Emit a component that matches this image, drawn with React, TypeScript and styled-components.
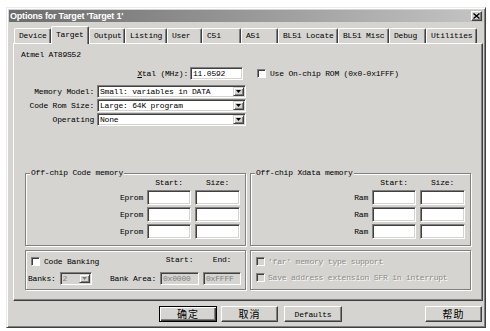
import React from 'react';
import styled, { createGlobalStyle } from 'styled-components';

const FACE = '#d5d4d0';
const MONO = `"Liberation Mono", "DejaVu Sans Mono", monospace`;

const Global = createGlobalStyle`
  html, body { margin: 0; padding: 0; background: #fff; }
  body { width: 490px; height: 331px; overflow: hidden; }
`;

const Page = styled.div`
  padding: 7px 0 0 6px;
`;

const Dialog = styled.div`
  box-sizing: border-box;
  width: 480px;
  height: 321px;
  background: ${FACE};
  border: 1px solid;
  border-color: #ececec #404040 #404040 #ececec;
  box-shadow: inset 1px 1px #fff, inset -1px -1px #808080;
  padding: 2px 2px 0 2px;
  display: flex;
  flex-direction: column;
  font-family: ${MONO};
  font-size: 8px;
  letter-spacing: -0.2px;
  color: #000;
`;

const TitleBar = styled.div`
  height: 12px;
  display: flex;
  align-items: center;
  justify-content: space-between;
  padding: 0 1px 0 1px;
  background: linear-gradient(to right, #6c6c6c, #c4c4c4);
`;

const Title = styled.span`
  font-family: "Liberation Sans", Arial, sans-serif;
  font-weight: bold;
  font-size: 9px;
  letter-spacing: -0.2px;
  color: #fff;
  line-height: 12px;
`;

const CloseButton = styled.span`
  box-sizing: border-box;
  width: 11px;
  height: 10px;
  background: ${FACE};
  border: 1px solid;
  border-color: #fff #404040 #404040 #fff;
  box-shadow: inset -1px -1px #808080;
  display: flex;
  align-items: center;
  justify-content: center;
`;

const Body = styled.div`
  padding-left: 4px;
  display: flex;
  flex-direction: column;
`;

const TabStrip = styled.div`
  display: flex;
  align-items: flex-end;
  height: 17px;
  margin: 4px 0 0 1px;
  position: relative;
  z-index: 1;
`;

const Tab = styled.div<{ $w: number; $active?: boolean }>`
  box-sizing: border-box;
  width: ${(p) => p.$w}px;
  height: ${(p) => (p.$active ? 18 : 15)}px;
  margin-bottom: ${(p) => (p.$active ? -1 : 0)}px;
  padding: ${(p) => (p.$active ? '3px 0 0 4px' : '2px 0 0 4px')};
  background: ${FACE};
  border-top: 1px solid #fff;
  border-left: 1px solid #fff;
  border-right: 1px solid #404040;
  box-shadow: inset -1px 0 #808080;
  border-radius: 2px 2px 0 0;
  line-height: 10px;
  white-space: nowrap;
`;

const Panel = styled.div`
  box-sizing: border-box;
  width: 470px;
  height: 258px;
  border: 1px solid;
  border-color: #fff #404040 #404040 #fff;
  box-shadow: inset -1px -1px #808080;
  display: flex;
  flex-direction: column;
`;

const TopArea = styled.div`
  padding: 5px 0 0 7px;
  display: flex;
  flex-direction: column;
`;

const DeviceName = styled.div`
  height: 12px;
  line-height: 12px;
`;

const XtalRow = styled.div`
  display: flex;
  align-items: center;
  height: 13px;
  margin-top: 6px;
`;

const XtalLabel = styled.span`
  box-sizing: border-box;
  width: 169px;
  padding-right: 2px;
  text-align: right;
  white-space: nowrap;
`;

const Field = styled.div<{ $w: number; $disabled?: boolean }>`
  box-sizing: border-box;
  width: ${(p) => p.$w}px;
  height: 100%;
  flex: none;
  background: ${(p) => (p.$disabled ? FACE : '#fff')};
  border: 1px solid;
  border-color: #808080 #fff #fff #808080;
  box-shadow: inset 1px 1px #404040, inset -1px -1px ${FACE};
  padding: 0 2px;
  display: flex;
  align-items: center;
  color: ${(p) => (p.$disabled ? '#808080' : '#000')};
  white-space: nowrap;
  overflow: hidden;
`;

const Check = styled.span<{ $disabled?: boolean }>`
  box-sizing: border-box;
  width: 9px;
  height: 9px;
  flex: none;
  background: ${(p) => (p.$disabled ? FACE : '#fff')};
  border: 1px solid;
  border-color: #808080 #fff #fff #808080;
  box-shadow: inset 1px 1px #404040;
`;

const CheckLabel = styled.span<{ $disabled?: boolean; $gap: number }>`
  margin-left: ${(p) => p.$gap}px;
  white-space: nowrap;
  color: ${(p) => (p.$disabled ? '#8a8a8a' : '#000')};
  text-shadow: ${(p) => (p.$disabled ? '1px 1px #fff' : 'none')};
`;

const XtalCheck = styled.div`
  display: flex;
  align-items: center;
  margin-left: 14px;
`;

const SelectRows = styled.div`
  display: flex;
  flex-direction: column;
  gap: 1px;
  margin-top: 5px;
`;

const SelectRow = styled.div`
  display: flex;
  align-items: center;
  height: 13px;
`;

const SelectLabel = styled.span`
  box-sizing: border-box;
  width: 76px;
  padding-right: 3px;
  text-align: right;
  white-space: nowrap;
`;

const Select = styled.div<{ $w: number; $disabled?: boolean; $ml?: number }>`
  box-sizing: border-box;
  width: ${(p) => p.$w}px;
  height: 100%;
  flex: none;
  margin-left: ${(p) => p.$ml ?? 0}px;
  display: flex;
  align-items: stretch;
  background: ${(p) => (p.$disabled ? FACE : '#fff')};
  border: 1px solid;
  border-color: #808080 #fff #fff #808080;
  box-shadow: inset 1px 1px #404040, inset -1px -1px ${FACE};
  color: ${(p) => (p.$disabled ? '#808080' : '#000')};
`;

const SelectText = styled.span`
  flex: 1;
  padding-left: 2px;
  display: flex;
  align-items: center;
  white-space: nowrap;
  overflow: hidden;
`;

const DropButton = styled.span`
  box-sizing: border-box;
  width: 11px;
  margin: 1px 1px 1px 0;
  background: ${FACE};
  border: 1px solid;
  border-color: ${FACE} #404040 #404040 ${FACE};
  box-shadow: inset 1px 1px #fff, inset -1px -1px #808080;
  display: flex;
  align-items: center;
  justify-content: center;
`;

const GroupArea = styled.div`
  margin-top: 42px;
  padding-left: 11px;
  display: grid;
  grid-template-columns: 221px 221px;
  grid-template-rows: 78px 40px;
  column-gap: 4px;
  row-gap: 4px;
`;

const Group = styled.fieldset`
  box-sizing: border-box;
  margin: 0;
  min-width: 0;
  height: 100%;
  border: 1px solid #808080;
  box-shadow: 1px 1px #fff, inset 1px 1px #fff;
  padding: 0 5px 0 5px;
`;

const Legend = styled.legend`
  padding: 0 1px;
  margin-left: -1px;
  line-height: 10px;
  background: ${FACE};
  white-space: nowrap;
`;

const MemGrid = styled.div`
  display: grid;
  grid-template-columns: 1fr 44px 45px;
  grid-template-rows: 10px 15px 15px 15px;
  column-gap: 4px;
  row-gap: 2px;
`;

const ColHead = styled.span`
  text-align: center;
  line-height: 10px;
`;

const RowLabel = styled.span`
  display: flex;
  align-items: center;
  justify-content: flex-end;
`;

const PlainGroup = styled.div`
  box-sizing: border-box;
  border: 1px solid #808080;
  box-shadow: 1px 1px #fff, inset 1px 1px #fff;
`;

const BankGrid = styled.div`
  box-sizing: border-box;
  height: 100%;
  padding: 4px 4px 0 2px;
  display: grid;
  grid-template-columns: 1fr 39px 38px;
  grid-template-rows: 12px 13px;
  column-gap: 4px;
  row-gap: 5px;
`;

const CheckLine = styled.div<{ $indent?: number }>`
  display: flex;
  align-items: center;
  height: 12px;
  padding-left: ${(p) => p.$indent ?? 0}px;
`;

const BankLine = styled.div`
  display: flex;
  align-items: center;
`;

const BankAreaLabel = styled.span`
  margin-left: auto;
  white-space: nowrap;
`;

const OptionList = styled.div`
  box-sizing: border-box;
  height: 100%;
  padding: 4px 0 0 5px;
  display: flex;
  flex-direction: column;
  gap: 4px;
`;

const ButtonRow = styled.div`
  display: flex;
  margin-top: 5px;
  padding-left: 150px;
  padding-right: 1px;
`;

const Button = styled.button<{ $w: number; $default?: boolean; $gap?: number; $push?: boolean }>`
  box-sizing: border-box;
  width: ${(p) => p.$w}px;
  height: 16px;
  margin: 0 0 0 ${(p) => (p.$push ? 'auto' : `${p.$gap ?? 0}px`)};
  padding: 0;
  background: ${FACE};
  border: 1px solid;
  border-color: ${(p) => (p.$default ? '#000' : '#fff #404040 #404040 #fff')};
  box-shadow: ${(p) =>
    p.$default
      ? 'inset 1px 1px #fff, inset -1px -1px #404040, inset -2px -2px #808080'
      : 'inset -1px -1px #808080'};
  font-family: ${MONO};
  font-size: 8px;
  letter-spacing: -0.2px;
  color: #000;
  display: flex;
  align-items: center;
  justify-content: center;
`;

const Cjk = styled.span`
  font-family: "Noto Sans CJK SC", "Noto Sans", sans-serif;
  font-size: 10px;
  letter-spacing: 1px;
  line-height: 12px;
`;

const Arrow = ({ color = '#000' }: { color?: string }) => (
  <svg width="5" height="3" viewBox="0 0 5 3">
    <path d="M0 0h5L2.5 3z" fill={color} />
  </svg>
);

const CloseX = () => (
  <svg width="7" height="6" viewBox="0 0 7 6">
    <path d="M0.5 0.5L6.5 5.5M6.5 0.5L0.5 5.5" stroke="#000" strokeWidth="1.4" />
  </svg>
);

const tabs: { label: string; w: number }[] = [
  { label: 'Device', w: 37 },
  { label: 'Target', w: 38 },
  { label: 'Output', w: 36 },
  { label: 'Listing', w: 42 },
  { label: 'User', w: 35 },
  { label: 'C51', w: 39 },
  { label: 'A51', w: 37 },
  { label: 'BL51 Locate', w: 60 },
  { label: 'BL51 Misc', w: 51 },
  { label: 'Debug', w: 37 },
  { label: 'Utilities', w: 51 },
];

const MemoryGroup = ({ title, label }: { title: string; label: string }) => (
  <Group>
    <Legend>{title}</Legend>
    <MemGrid>
      <span />
      <ColHead>Start:</ColHead>
      <ColHead>Size:</ColHead>
      {[0, 1, 2].map((i) => (
        <React.Fragment key={i}>
          <RowLabel>{label}</RowLabel>
          <Field $w={44} />
          <Field $w={45} />
        </React.Fragment>
      ))}
    </MemGrid>
  </Group>
);

export default function App() {
  return (
    <>
      <Global />
      <Page>
        <Dialog>
          <TitleBar>
            <Title>Options for Target 'Target 1'</Title>
            <CloseButton>
              <CloseX />
            </CloseButton>
          </TitleBar>
          <Body>
            <TabStrip>
              {tabs.map((t) => (
                <Tab key={t.label} $w={t.w} $active={t.label === 'Target'}>
                  {t.label}
                </Tab>
              ))}
            </TabStrip>
            <Panel>
              <TopArea>
                <DeviceName>Atmel AT89S52</DeviceName>
                <XtalRow>
                  <XtalLabel>
                    <u>X</u>tal (MHz):
                  </XtalLabel>
                  <Field $w={53}>11.0592</Field>
                  <XtalCheck>
                    <Check />
                    <CheckLabel $gap={4}>Use On-chip ROM (0x0-0x1FFF)</CheckLabel>
                  </XtalCheck>
                </XtalRow>
                <SelectRows>
                  <SelectRow>
                    <SelectLabel>Memory Model:</SelectLabel>
                    <Select $w={149}>
                      <SelectText>Small: variables in DATA</SelectText>
                      <DropButton>
                        <Arrow />
                      </DropButton>
                    </Select>
                  </SelectRow>
                  <SelectRow>
                    <SelectLabel>Code Rom Size:</SelectLabel>
                    <Select $w={149}>
                      <SelectText>Large: 64K program</SelectText>
                      <DropButton>
                        <Arrow />
                      </DropButton>
                    </Select>
                  </SelectRow>
                  <SelectRow>
                    <SelectLabel>Operating</SelectLabel>
                    <Select $w={149}>
                      <SelectText>None</SelectText>
                      <DropButton>
                        <Arrow />
                      </DropButton>
                    </Select>
                  </SelectRow>
                </SelectRows>
              </TopArea>
              <GroupArea>
                <MemoryGroup title="Off-chip Code memory" label="Eprom" />
                <MemoryGroup title="Off-chip Xdata memory" label="Ram" />
                <PlainGroup>
                  <BankGrid>
                    <CheckLine $indent={3}>
                      <Check />
                      <CheckLabel $gap={4}>Code Banking</CheckLabel>
                    </CheckLine>
                    <ColHead>Start:</ColHead>
                    <ColHead>End:</ColHead>
                    <BankLine>
                      <span>Banks:</span>
                      <Select $w={32} $disabled $ml={4}>
                        <SelectText>2</SelectText>
                        <DropButton>
                          <Arrow color="#808080" />
                        </DropButton>
                      </Select>
                      <BankAreaLabel>Bank Area:</BankAreaLabel>
                    </BankLine>
                    <Field $w={39} $disabled>
                      0x0000
                    </Field>
                    <Field $w={38} $disabled>
                      0xFFFF
                    </Field>
                  </BankGrid>
                </PlainGroup>
                <PlainGroup>
                  <OptionList>
                    <CheckLine>
                      <Check $disabled />
                      <CheckLabel $gap={3} $disabled>
                        'far' memory type support
                      </CheckLabel>
                    </CheckLine>
                    <CheckLine>
                      <Check $disabled />
                      <CheckLabel $gap={3} $disabled>
                        Save address extension SFR in interrupt
                      </CheckLabel>
                    </CheckLine>
                  </OptionList>
                </PlainGroup>
              </GroupArea>
            </Panel>
          </Body>
          <ButtonRow>
            <Button $w={58} $default>
              <Cjk>确定</Cjk>
            </Button>
            <Button $w={57} $gap={4}>
              <Cjk>取消</Cjk>
            </Button>
            <Button $w={58} $gap={6}>
              Defaults
            </Button>
            <Button $w={57} $push>
              <Cjk>帮助</Cjk>
            </Button>
          </ButtonRow>
        </Dialog>
      </Page>
    </>
  );
}
